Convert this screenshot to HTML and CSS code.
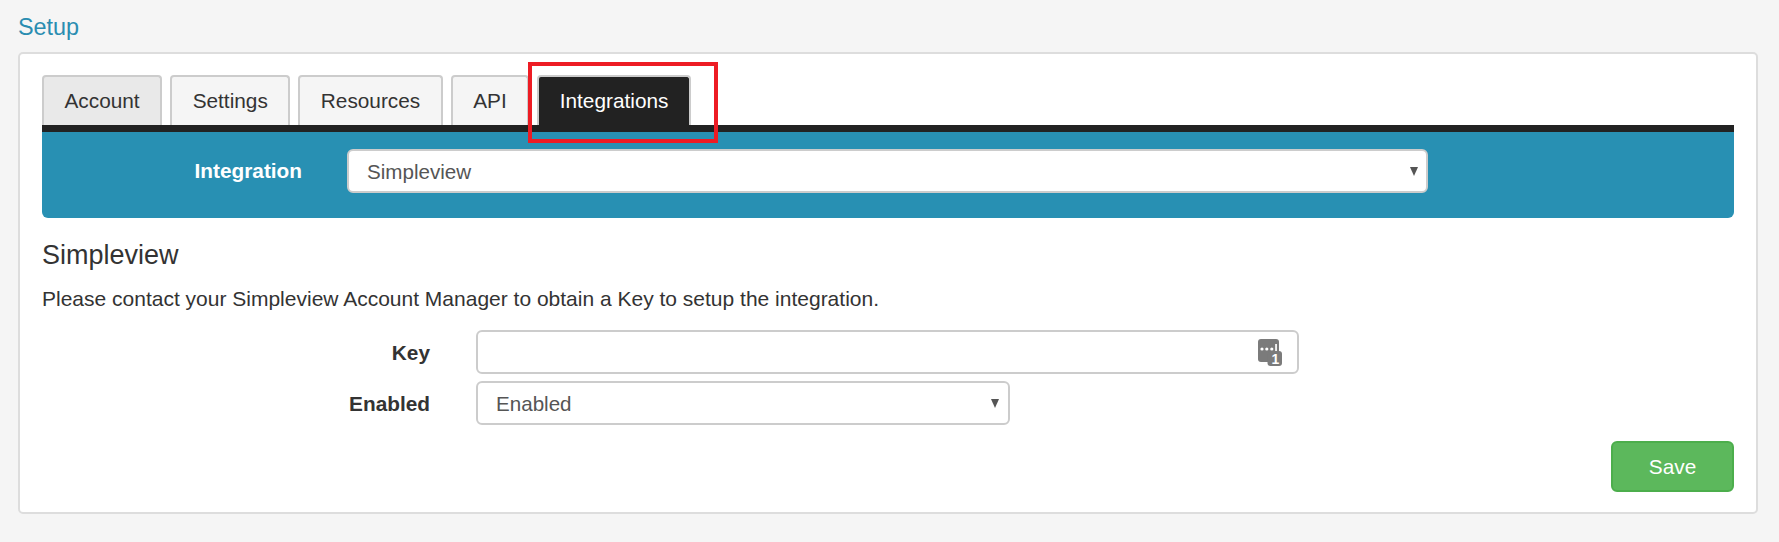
FILE: index.html
```html
<!DOCTYPE html>
<html>
<head>
    <title>Setup</title>
    <link rel="stylesheet" href="styles.css">
</head>
<body>
    <h2 class="page-title">Setup</h2>

    <div class="panel">
        <div class="tabs">
            <a class="tab tab-first">Account</a>
            <a class="tab">Settings</a>
            <a class="tab">Resources</a>
            <a class="tab">API</a>
            <a class="tab tab-active">Integrations</a>
            <div class="callout"></div>
        </div>

        <div class="picker">
            <label class="picker-label">Integration</label>
            <div class="select-wrap picker-select">
                <select>
                    <option>Simpleview</option>
                </select>
            </div>
        </div>

        <h3 class="section-title">Simpleview</h3>
        <p class="section-text">Please contact your Simpleview Account Manager to obtain a Key to setup the integration.</p>

        <div class="form-row form-row-first">
            <label class="form-label">Key</label>
            <div class="key-wrap">
                <input type="text">
                <svg class="key-icon" width="24" height="27" viewBox="0 0 24 27">
                    <rect x="0" y="0" width="21" height="23" rx="3" fill="#7b7b7b"/>
                    <circle cx="4" cy="10" r="1.6" fill="#fff"/>
                    <circle cx="8.8" cy="10" r="1.6" fill="#fff"/>
                    <circle cx="13.8" cy="10" r="1.6" fill="#fff"/>
                    <rect x="17.2" y="5" width="1.7" height="7" fill="#fff"/>
                    <rect x="9.5" y="12" width="14.5" height="15" rx="3" fill="#7b7b7b"/>
                    <text x="17.5" y="25" class="key-icon-num">1</text>
                </svg>
            </div>
        </div>

        <div class="form-row">
            <label class="form-label">Enabled</label>
            <div class="select-wrap enabled-select">
                <select>
                    <option>Enabled</option>
                </select>
            </div>
        </div>

        <div class="actions">
            <button class="btn-save">Save</button>
        </div>
    </div>
</body>
</html>
```

FILE: styles.css
```css
/* Setup page */
body {
    font-family: "Liberation Sans", Arial, sans-serif;
    font-size: 20px;
    color: #333;
    background: #f5f5f5;
    margin: 0;
    padding: 13px 21px 0 18px;
}

.page-title {
    font-size: 23.4px;
    font-weight: normal;
    color: #2a8db1;
    line-height: 28px;
    margin: 0 0 11px 0;
}

.panel {
    background: #fff;
    border: 2px solid #ddd;
    border-radius: 5px;
    height: 462px;
    box-sizing: border-box;
    padding: 21px 22px 0 22px;
}

/* tabs */
.tabs {
    display: flex;
    gap: 8px;
    position: relative;
    height: 50px;
}

.tab {
    display: block;
    box-sizing: border-box;
    height: 50px;
    padding: 0 20.5px;
    line-height: 48px;
    font-size: 20.8px;
    background: #f5f5f5;
    border: 2px solid #ccc;
    border-bottom: none;
    border-radius: 4px 4px 0 0;
}

.tab-first {
    background: #e9e9e9;
}

.tab-active {
    background: #222;
    color: #fff;
}

.callout {
    position: absolute;
    left: 486px;
    top: -13px;
    width: 190px;
    height: 81px;
    box-sizing: border-box;
    border: 4px solid #ed1c24;
    z-index: 2;
}

/* teal bar */
.picker {
    display: flex;
    align-items: center;
    height: 93px;
    box-sizing: border-box;
    padding: 0 0 8px 0;
    background: #2890b3;
    border-top: 7px solid #222;
    border-radius: 0 0 6px 6px;
}

.picker-label {
    width: 152px;
    margin-left: 108px;
    margin-right: 45px;
    text-align: right;
    font-weight: bold;
    font-size: 20.8px;
    color: #fff;
}

.select-wrap {
    position: relative;
}

.select-wrap::after {
    content: "";
    position: absolute;
    right: 10px;
    top: 18px;
    border-left: 4.5px solid transparent;
    border-right: 4.5px solid transparent;
    border-top: 9px solid #555;
    pointer-events: none;
}

.enabled-select::after {
    right: 11px;
}

select {
    display: block;
    width: 100%;
    height: 44px;
    box-sizing: border-box;
    padding: 0 18px;
    font-family: inherit;
    font-size: 20.6px;
    color: #555;
    background: #fff;
    border: 2px solid #ccc;
    border-radius: 6px;
    appearance: none;
    -webkit-appearance: none;
}

.picker-select {
    width: 1081px;
}

.enabled-select {
    width: 534px;
}

/* form */
.section-title {
    font-size: 27px;
    font-weight: normal;
    line-height: 32px;
    margin: 21px 0 0 0;
}

.section-text {
    font-size: 21px;
    line-height: 24px;
    margin: 16px 0 0 0;
}

.form-row {
    display: flex;
    align-items: center;
    margin-top: 7px;
}

.form-row-first {
    margin-top: 19px;
}

.form-label {
    width: 388px;
    margin-right: 46px;
    padding-top: 2px;
    text-align: right;
    font-weight: bold;
    font-size: 20.8px;
}

.key-wrap {
    position: relative;
    width: 823px;
}

.key-wrap input {
    display: block;
    width: 100%;
    height: 44px;
    box-sizing: border-box;
    background: #fff;
    border: 2px solid #ccc;
    border-radius: 6px;
}

.key-icon {
    position: absolute;
    right: 17px;
    top: 9px;
}

.key-icon-num {
    font-size: 14px;
    font-weight: bold;
    fill: #fff;
    text-anchor: middle;
}

.actions {
    display: flex;
    justify-content: flex-end;
    margin-top: 16px;
}

.btn-save {
    width: 123px;
    height: 51px;
    font-family: inherit;
    font-size: 20.8px;
    color: #fff;
    background: #5cb85c;
    border: 2px solid #4cae4c;
    border-radius: 6px;
}
```
